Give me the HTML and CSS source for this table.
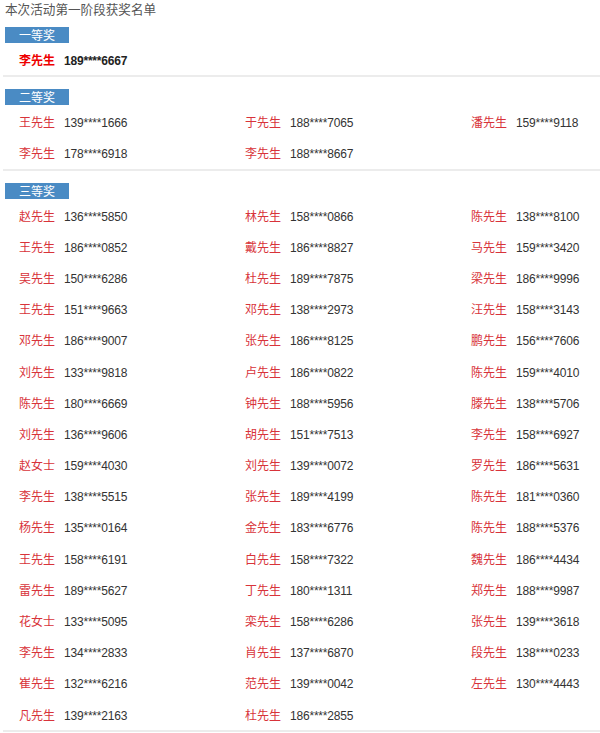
FILE: index.html
```html
<!DOCTYPE html>
<html lang="zh-CN">
<head>
<meta charset="utf-8">
<title>本次活动第一阶段获奖名单</title>
<link rel="stylesheet" href="styles.css">
</head>
<body>
<div class="page">
  <div class="title">本次活动第一阶段获奖名单</div>

  <section class="prize">
    <div class="badge">一等奖</div>
    <ul class="list first">
      <li><span class="name">李先生</span><span class="phone">189****6667</span></li>
    </ul>
  </section>

  <section class="prize">
    <div class="badge">二等奖</div>
    <ul class="list">
      <li><span class="name">王先生</span><span class="phone">139****1666</span></li>
      <li><span class="name">于先生</span><span class="phone">188****7065</span></li>
      <li><span class="name">潘先生</span><span class="phone">159****9118</span></li>
      <li><span class="name">李先生</span><span class="phone">178****6918</span></li>
      <li><span class="name">李先生</span><span class="phone">188****8667</span></li>
    </ul>
  </section>

  <section class="prize">
    <div class="badge">三等奖</div>
    <ul class="list">
      <li><span class="name">赵先生</span><span class="phone">136****5850</span></li>
      <li><span class="name">林先生</span><span class="phone">158****0866</span></li>
      <li><span class="name">陈先生</span><span class="phone">138****8100</span></li>
      <li><span class="name">王先生</span><span class="phone">186****0852</span></li>
      <li><span class="name">戴先生</span><span class="phone">186****8827</span></li>
      <li><span class="name">马先生</span><span class="phone">159****3420</span></li>
      <li><span class="name">吴先生</span><span class="phone">150****6286</span></li>
      <li><span class="name">杜先生</span><span class="phone">189****7875</span></li>
      <li><span class="name">梁先生</span><span class="phone">186****9996</span></li>
      <li><span class="name">王先生</span><span class="phone">151****9663</span></li>
      <li><span class="name">邓先生</span><span class="phone">138****2973</span></li>
      <li><span class="name">汪先生</span><span class="phone">158****3143</span></li>
      <li><span class="name">邓先生</span><span class="phone">186****9007</span></li>
      <li><span class="name">张先生</span><span class="phone">186****8125</span></li>
      <li><span class="name">鹏先生</span><span class="phone">156****7606</span></li>
      <li><span class="name">刘先生</span><span class="phone">133****9818</span></li>
      <li><span class="name">卢先生</span><span class="phone">186****0822</span></li>
      <li><span class="name">陈先生</span><span class="phone">159****4010</span></li>
      <li><span class="name">陈先生</span><span class="phone">180****6669</span></li>
      <li><span class="name">钟先生</span><span class="phone">188****5956</span></li>
      <li><span class="name">滕先生</span><span class="phone">138****5706</span></li>
      <li><span class="name">刘先生</span><span class="phone">136****9606</span></li>
      <li><span class="name">胡先生</span><span class="phone">151****7513</span></li>
      <li><span class="name">李先生</span><span class="phone">158****6927</span></li>
      <li><span class="name">赵女士</span><span class="phone">159****4030</span></li>
      <li><span class="name">刘先生</span><span class="phone">139****0072</span></li>
      <li><span class="name">罗先生</span><span class="phone">186****5631</span></li>
      <li><span class="name">李先生</span><span class="phone">138****5515</span></li>
      <li><span class="name">张先生</span><span class="phone">189****4199</span></li>
      <li><span class="name">陈先生</span><span class="phone">181****0360</span></li>
      <li><span class="name">杨先生</span><span class="phone">135****0164</span></li>
      <li><span class="name">金先生</span><span class="phone">183****6776</span></li>
      <li><span class="name">陈先生</span><span class="phone">188****5376</span></li>
      <li><span class="name">王先生</span><span class="phone">158****6191</span></li>
      <li><span class="name">白先生</span><span class="phone">158****7322</span></li>
      <li><span class="name">魏先生</span><span class="phone">186****4434</span></li>
      <li><span class="name">雷先生</span><span class="phone">189****5627</span></li>
      <li><span class="name">丁先生</span><span class="phone">180****1311</span></li>
      <li><span class="name">郑先生</span><span class="phone">188****9987</span></li>
      <li><span class="name">花女士</span><span class="phone">133****5095</span></li>
      <li><span class="name">栾先生</span><span class="phone">158****6286</span></li>
      <li><span class="name">张先生</span><span class="phone">139****3618</span></li>
      <li><span class="name">李先生</span><span class="phone">134****2833</span></li>
      <li><span class="name">肖先生</span><span class="phone">137****6870</span></li>
      <li><span class="name">段先生</span><span class="phone">138****0233</span></li>
      <li><span class="name">崔先生</span><span class="phone">132****6216</span></li>
      <li><span class="name">范先生</span><span class="phone">139****0042</span></li>
      <li><span class="name">左先生</span><span class="phone">130****4443</span></li>
      <li><span class="name">凡先生</span><span class="phone">139****2163</span></li>
      <li><span class="name">杜先生</span><span class="phone">186****2855</span></li>
    </ul>
  </section>
</div>
</body>
</html>
```
FILE: styles.css
```css
* { box-sizing: border-box; }
html, body { margin: 0; padding: 0; background: #fff; }
body {
  font-family: "Noto Sans CJK SC", "Noto Sans", sans-serif;
  font-size: 12px;
  color: #333;
}
.page { width: 600px; overflow: hidden; }
.title {
  height: 18px;
  line-height: 18px;
  padding-left: 5px;
  font-size: 12.6px;
  color: #555;
}
.prize {
  padding-top: 9px;
  margin-left: 3px;
  border-bottom: 2px solid #ececec;
}
.prize + .prize { padding-top: 12px; }
.badge {
  margin-left: 2px;
  margin-bottom: 1px;
  width: 64px;
  height: 16px;
  line-height: 16px;
  background: #4a8bc4;
  color: #fff;
  text-align: center;
  font-size: 12px;
}
.list {
  list-style: none;
  margin: 0;
  padding: 0 0 0 16px;
  display: grid;
  grid-template-columns: 226px 226px minmax(0, 1fr);
  grid-auto-rows: 31.2px;
}
.list li {
  display: block;
  line-height: 31px;
  white-space: nowrap;
}
.name {
  display: inline-block;
  width: 45px;
  color: #d8333a;
}
.phone {
  font-family: "Liberation Sans", Arial, sans-serif;
  letter-spacing: -0.2px;
  color: #333;
}
.first .name { color: #e00; font-weight: bold; }
.first .phone { font-weight: bold; color: #222; }
```
